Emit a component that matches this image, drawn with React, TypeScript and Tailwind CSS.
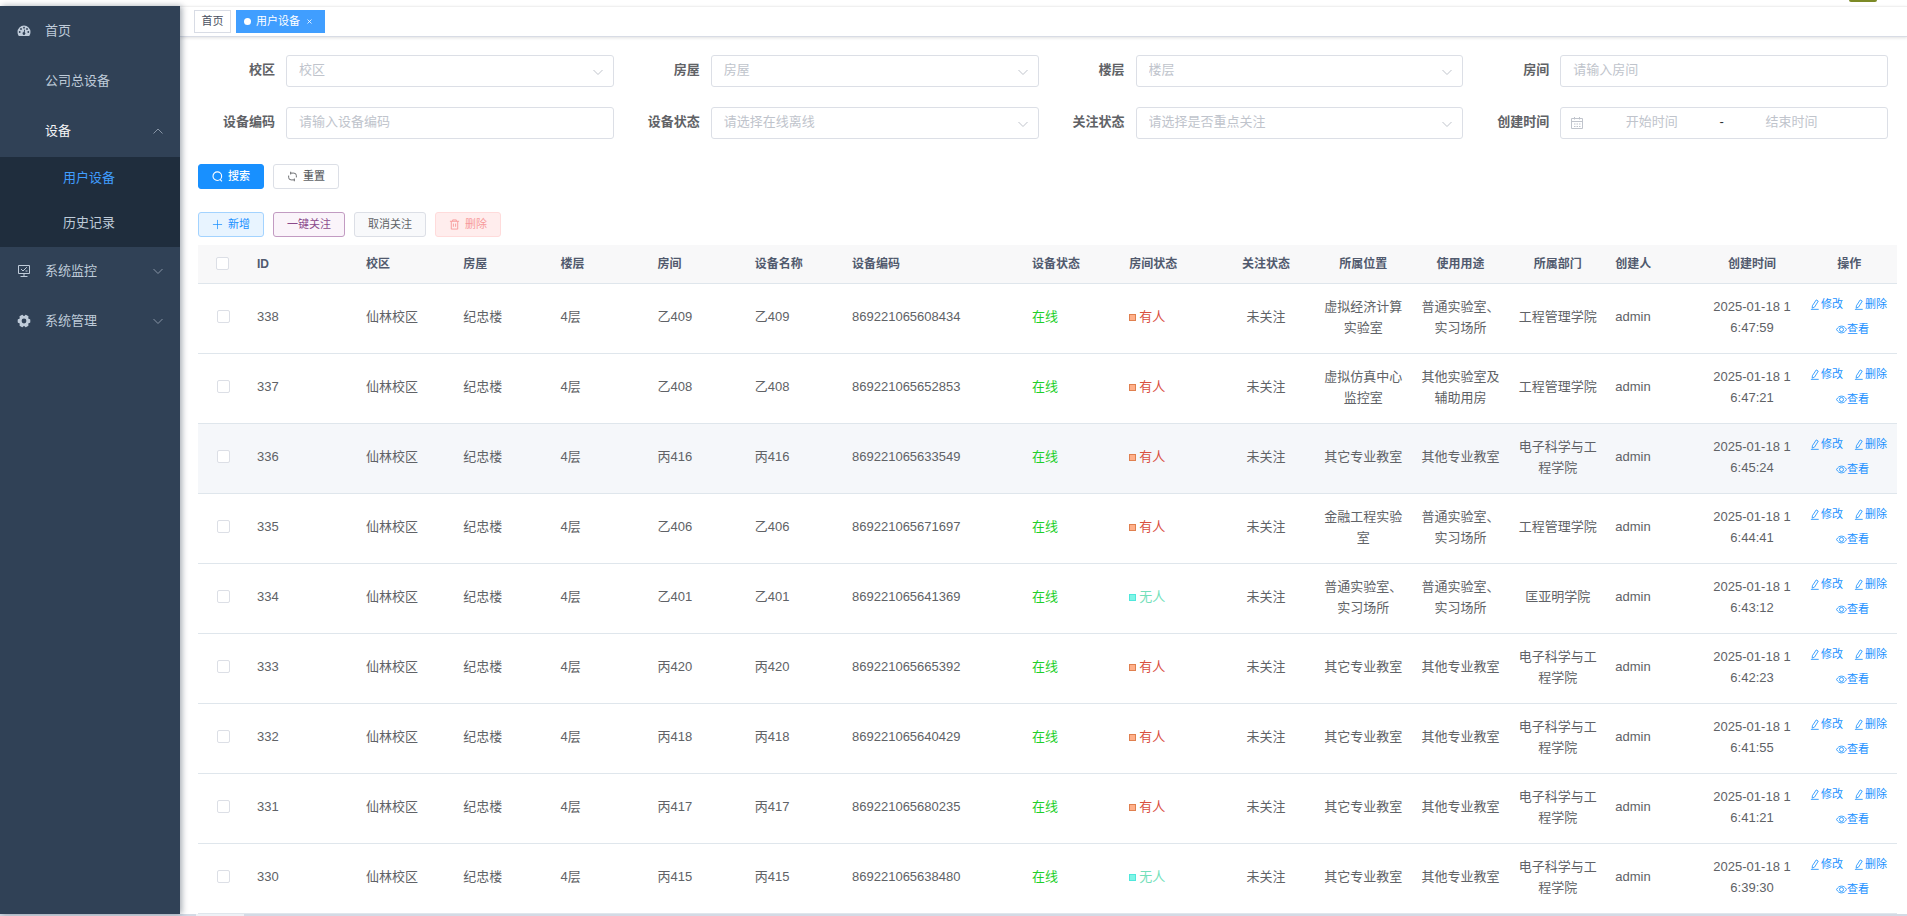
import React from 'react';

const rows = [
  ['338', '乙409', '869221065608434', '有人', '虚拟经济计算实验室', '普通实验室、实习场所', '工程管理学院', '2025-01-18 16:47:59'],
  ['337', '乙408', '869221065652853', '有人', '虚拟仿真中心监控室', '其他实验室及辅助用房', '工程管理学院', '2025-01-18 16:47:21'],
  ['336', '丙416', '869221065633549', '有人', '其它专业教室', '其他专业教室', '电子科学与工程学院', '2025-01-18 16:45:24'],
  ['335', '乙406', '869221065671697', '有人', '金融工程实验室', '普通实验室、实习场所', '工程管理学院', '2025-01-18 16:44:41'],
  ['334', '乙401', '869221065641369', '无人', '普通实验室、实习场所', '普通实验室、实习场所', '匡亚明学院', '2025-01-18 16:43:12'],
  ['333', '丙420', '869221065665392', '有人', '其它专业教室', '其他专业教室', '电子科学与工程学院', '2025-01-18 16:42:23'],
  ['332', '丙418', '869221065640429', '有人', '其它专业教室', '其他专业教室', '电子科学与工程学院', '2025-01-18 16:41:55'],
  ['331', '丙417', '869221065680235', '有人', '其它专业教室', '其他专业教室', '电子科学与工程学院', '2025-01-18 16:41:21'],
  ['330', '丙415', '869221065638480', '无人', '其它专业教室', '其他专业教室', '电子科学与工程学院', '2025-01-18 16:39:30'],
];

const columns: { title: string; center?: boolean }[] = [
  { title: 'ID' },
  { title: '校区' },
  { title: '房屋' },
  { title: '楼层' },
  { title: '房间' },
  { title: '设备名称' },
  { title: '设备编码' },
  { title: '设备状态' },
  { title: '房间状态' },
  { title: '关注状态', center: true },
  { title: '所属位置', center: true },
  { title: '使用用途', center: true },
  { title: '所属部门', center: true },
  { title: '创建人' },
  { title: '创建时间', center: true },
  { title: '操作', center: true },
];

function Chevron({ up, className }: { up?: boolean; className?: string }) {
  return (
    <svg className={className} viewBox="0 0 12 12" fill="none" stroke="currentColor" strokeWidth="1">
      <path d={up ? 'M1.5 8.5 6 4l4.5 4.5' : 'M1.5 4 6 8.5 10.500 4'} />
    </svg>
  );
}

function PenIcon() {
  return (
    <svg className="size-[11px]" viewBox="0 0 12 12" fill="none" stroke="currentColor" strokeWidth="0.9">
      <path d="M6.800 1 9 2.300 5 8.800 2.400 10 2.600 7.400zM1 11.300H9.500" />
    </svg>
  );
}

function EyeIcon() {
  return (
    <svg className="size-[11px]" viewBox="0 0 12 12" fill="none" stroke="currentColor" strokeWidth="0.9">
      <path d="M.6 6C1.800 3.600 3.700 2.300 6 2.300S10.200 3.600 11.400 6C10.200 8.400 8.300 9.700 6 9.700S1.800 8.400.6 6z" />
      <circle cx="6" cy="6" r="2.200" />
    </svg>
  );
}

function DashboardIcon() {
  return (
    <svg className="size-[14px]" viewBox="0 0 14 14">
      <path fill="currentColor" d="M7 1.500a6.500 6.500 0 0 0-6.500 6.500c0 1.400.4 2.700 1.100 3.800.1.200.3.300.5.300h9.800c.2 0 .4-.1.500-.3.700-1.100 1.100-2.400 1.100-3.800A6.500 6.500 0 0 0 7 1.500z" />
      <g fill="#304156">
        <circle cx="2.700" cy="8" r="0.900" />
        <circle cx="4" cy="5" r="0.900" />
        <circle cx="7" cy="3.700" r="0.900" />
        <circle cx="10" cy="5" r="0.900" />
        <circle cx="11.300" cy="8" r="0.900" />
        <path d="M7.300 5.500 8.100 5.700 7.700 8.300A1.400 1.400 0 1 1 6.700 8.100z" />
      </g>
    </svg>
  );
}

function MonitorIcon() {
  return (
    <svg className="size-[14px]" viewBox="0 0 14 14" fill="none" stroke="currentColor" strokeWidth="1">
      <path d="M1.500 1.500h11v8h-11zM7 9.500v3M3.500 12.500h7M4 5 6 7 9.800 3.200M8.500 7h2" />
    </svg>
  );
}

function GearIcon() {
  return (
    <svg className="size-[14px]" viewBox="0 0 14 14">
      <g fill="currentColor">
        <circle cx="7" cy="7" r="5.200" />
        <rect x="5" y="0.700" width="4" height="12.600" rx="1" transform="rotate(30 7 7)" />
        <rect x="5" y="0.700" width="4" height="12.600" rx="1" transform="rotate(90 7 7)" />
        <rect x="5" y="0.700" width="4" height="12.600" rx="1" transform="rotate(150 7 7)" />
      </g>
      <circle cx="7" cy="7" r="2.400" fill="#304156" />
    </svg>
  );
}

function MenuItem({ icon, label, arrow, active }: { icon?: React.ReactNode; label: string; arrow?: 'up' | 'down'; active?: boolean }) {
  return (
    <li>
      <a href="#" className={`flex h-[50px] items-center pr-4 pb-0.5 pl-[17px] text-[13px] ${active ? 'text-[#f4f4f5]' : 'text-[#bfcbd9]'}`}>
        <span className="w-7">{icon}</span>
        <span className="flex-1">{label}</span>
        {arrow && <Chevron up={arrow === 'up'} className="size-3 text-[#8794a5]" />}
      </a>
    </li>
  );
}

function Field({ id, label, children }: { id: string; label: string; children: React.ReactNode }) {
  return (
    <div className="flex pr-[9px]">
      <label htmlFor={id} className="w-[88px] shrink-0 pr-[11px] text-right text-[13px] leading-[30px] font-bold text-[#606266]">
        {label}
      </label>
      <div className="min-w-0 flex-1">{children}</div>
    </div>
  );
}

function TextField({ id, label, placeholder }: { id: string; label: string; placeholder: string }) {
  return (
    <Field id={id} label={label}>
      <input id={id} placeholder={placeholder} className="block h-8 w-full rounded-[3px] border border-[#dcdfe6] px-3 pb-[3px] text-[13px] placeholder:text-[#c0c4cc]" />
    </Field>
  );
}

function SelectField({ id, label, placeholder }: { id: string; label: string; placeholder: string }) {
  return (
    <Field id={id} label={label}>
      <div className="relative">
        <select id={id} className="block h-8 w-full appearance-none rounded-[3px] border border-[#dcdfe6] bg-white px-3 pb-[3px] text-[13px] text-[#c0c4cc]">
          <option>{placeholder}</option>
        </select>
        <Chevron className="pointer-events-none absolute top-[11px] right-2.5 size-3 text-[#c0c4cc]" />
      </div>
    </Field>
  );
}

const buttonBase = 'flex h-[25px] items-center justify-center gap-[5px] rounded-[3px] border pb-px text-[11px]';

export default function App() {
  return (
    <div className="flex h-screen flex-col overflow-hidden bg-white font-['Liberation_Sans','Noto_Sans_CJK_SC',sans-serif] text-[#606266]">
      <div className="flex min-h-0 flex-1">
        <div className="z-10 flex w-[180px] shrink-0 flex-col pt-1.5">
          <nav className="flex-1 bg-[#304156] pt-px shadow-[2px_0_6px_rgba(0,21,41,0.35)]">
            <ul>
              <MenuItem icon={<DashboardIcon />} label="首页" />
              <MenuItem label="公司总设备" />
              <MenuItem label="设备" arrow="up" active />
              <li>
                <ul className="bg-[#1f2d3d] text-[13px]">
                  <li>
                    <a href="#" className="flex h-[45px] items-center pb-[3px] pl-[63px] text-[#409eff]">用户设备</a>
                  </li>
                  <li>
                    <a href="#" className="flex h-[45px] items-center pb-[3px] pl-[63px] text-[#bfcbd9]">历史记录</a>
                  </li>
                </ul>
              </li>
              <MenuItem icon={<MonitorIcon />} label="系统监控" arrow="down" />
              <MenuItem icon={<GearIcon />} label="系统管理" arrow="down" />
            </ul>
          </nav>
        </div>

        <main className="min-w-0 flex-1">
          <header className="flex h-1.5 justify-end pr-[30px]">
            <div className="h-0.5 w-7 rounded-b-[3px] bg-[#7c8a26]" />
          </header>
          <div className="flex h-[31px] items-start gap-[5px] border-t border-b border-t-[#f0f0f0] border-b-[#d8dce5] pt-[3px] pl-3.5 shadow-[0_1px_3px_rgba(0,0,0,0.12)]">
            <a href="#" className="flex h-[23px] w-[37px] items-center justify-center border border-[#d8dce5] text-[11px] text-[#495060]">首页</a>
            <a href="#" className="flex h-[23px] w-[89px] items-center bg-[#409eff] pl-2 text-[11px] text-white">
              <span className="mr-[5px] size-[7px] rounded-full bg-white" />
              用户设备
              <svg className="ml-[7px] size-[5px]" viewBox="0 0 5 5" stroke="currentColor" strokeWidth="0.8">
                <path d="M.5.5l4 4M4.500.5l-4 4" />
              </svg>
            </a>
          </div>

          <div className="pt-[18px] pr-2.5 pl-[18px]">
            <form className="grid grid-cols-4 gap-y-5">
              <SelectField id="campus" label="校区" placeholder="校区" />
              <SelectField id="building" label="房屋" placeholder="房屋" />
              <SelectField id="floor" label="楼层" placeholder="楼层" />
              <TextField id="room" label="房间" placeholder="请输入房间" />
              <TextField id="code" label="设备编码" placeholder="请输入设备编码" />
              <SelectField id="status" label="设备状态" placeholder="请选择在线离线" />
              <SelectField id="follow" label="关注状态" placeholder="请选择是否重点关注" />
              <Field id="start" label="创建时间">
                <div className="flex h-8 items-center rounded-[3px] border border-[#dcdfe6] pr-7 pb-0.5 pl-[9px] text-[13px]">
                  <svg className="mt-0.5 size-3.5 shrink-0" viewBox="0 0 14 14" fill="none" stroke="#c0c4cc">
                    <path d="M1.500 2.500h11v10h-11zM1.500 5.500h11M4.500 1v2.500M9.500 1v2.500M4 8h1.500M6.500 8H8M9 8h1.500M4 10.500h1.500M6.500 10.500H8M9 10.500h1.500" />
                  </svg>
                  <input id="start" placeholder="开始时间" className="min-w-0 flex-1 text-center placeholder:text-[#c0c4cc]" />
                  <span className="text-[#303133]">-</span>
                  <input aria-label="结束时间" placeholder="结束时间" className="min-w-0 flex-1 text-center placeholder:text-[#c0c4cc]" />
                </div>
              </Field>
            </form>

            <div className="mt-[25px] flex gap-[9px]">
              <button className={`${buttonBase} w-[66px] border-[#1890ff] bg-[#1890ff] font-medium text-white`}>
                <svg className="size-[11px]" viewBox="0 0 12 12" fill="none" stroke="currentColor" strokeWidth="1.200">
                  <circle cx="5.800" cy="5.600" r="4.700" />
                  <path d="m8.800 9.200 2 2" />
                </svg>
                搜索
              </button>
              <button className={`${buttonBase} w-[66px] border-[#dcdfe6] bg-white font-medium text-[#606266]`}>
                <svg className="size-[11px]" viewBox="0 0 12 12" fill="none" stroke="currentColor">
                  <path d="M4 2.300H7.500A2.700 2.700 0 0 1 10.200 5v2M8 9.700H4.500A2.700 2.700 0 0 1 1.800 7V5M4 .8v3M8 8.200v3" />
                </svg>
                重置
              </button>
            </div>

            <div className="mt-[23px] flex gap-[9px]">
              <button className={`${buttonBase} w-[66px] border-[#a3d3ff] bg-[#e8f4ff] text-[#1890ff]`}>
                <svg className="size-[11px]" viewBox="0 0 12 12" fill="none" stroke="currentColor" strokeWidth="0.8">
                  <path d="M6 1v10M1 6h10" />
                </svg>
                新增
              </button>
              <button className={`${buttonBase} w-[72px] border-[#c29bc2] bg-[#faf4fa] text-[#8b4a8b]`}>一键关注</button>
              <button className={`${buttonBase} w-[72px] border-[#dcdfe6] bg-[#f8f9fb] text-[#606266]`}>取消关注</button>
              <button disabled className={`${buttonBase} w-[66px] border-[#ffdbdb] bg-[#ffeded] text-[#f79a9a]`}>
                <svg className="size-[11px]" viewBox="0 0 12 12" fill="none" stroke="currentColor">
                  <path d="M1 2.500h10M4 2.500V1h4v1.500M2.500 2.500V11h7V2.500M4.800 5v3.500M7.200 5v3.500" />
                </svg>
                删除
              </button>
            </div>

            <table className="mt-2 w-full table-fixed border-collapse text-[13px] leading-[21px]">
              <colgroup>
                <col className="w-[49px]" />
                <col className="w-[109px]" />
                <col span={5} />
                <col className="w-[180px]" />
                <col span={9} />
              </colgroup>
              <thead>
                <tr className="h-[38px] border-b border-[#dfe6ec] bg-[#f8f8f9] text-xs text-[#515a6e]">
                  <th className="p-0">
                    <input type="checkbox" aria-label="全选" className="mx-auto block size-[13px] appearance-none rounded-[2px] border border-[#dcdfe6] bg-white" />
                  </th>
                  {columns.map((c) => (
                    <th key={c.title} className={`py-0 pr-2 pl-[10px] font-bold ${c.center ? 'text-center' : 'text-left'}`}>{c.title}</th>
                  ))}
                </tr>
              </thead>
              <tbody>
                {rows.map(([id, room, code, state, place, usage, dept, time]) => (
                  <tr key={id} className={`h-[70px] border-b border-[#dfe6ec] *:pt-0 *:pr-2 *:pb-[3px] *:pl-[10px] *:break-all ${id === '336' ? 'bg-[#f5f7fa]' : ''}`}>
                    <td>
                      <input type="checkbox" aria-label={id} className="mx-auto block size-[13px] appearance-none rounded-[2px] border border-[#dcdfe6] bg-white" />
                    </td>
                    <td>{id}</td>
                    <td>仙林校区</td>
                    <td>纪忠楼</td>
                    <td>4层</td>
                    <td>{room}</td>
                    <td>{room}</td>
                    <td>{code}</td>
                    <td className="text-[#1fcf2a]">在线</td>
                    <td>
                      <span className={`flex items-center gap-[3px] ${state === '有人' ? 'text-[#d9503f]' : 'text-[#74dfba]'}`}>
                        <span className={`mt-0.5 size-[7px] border ${state === '有人' ? 'border-[#e0804f] bg-[#ffb08a]' : 'border-[#4fe8dc] bg-[#7ff5e6]'}`} />
                        {state}
                      </span>
                    </td>
                    <td className="text-center">未关注</td>
                    <td className="text-center">{place}</td>
                    <td className="text-center">{usage}</td>
                    <td className="text-center">{dept}</td>
                    <td>admin</td>
                    <td className="text-center">{time}</td>
                    <td>
                      <div className="flex flex-wrap justify-end gap-x-[11px] gap-y-1 pr-0.5 text-[11px] text-[#1890ff]">
                        <button className="flex items-center"><PenIcon />修改</button>
                        <button className="flex items-center"><PenIcon />删除</button>
                        <button className="mr-[18px] flex items-center"><EyeIcon />查看</button>
                      </div>
                    </td>
                  </tr>
                ))}
              </tbody>
            </table>
          </div>
        </main>
      </div>
      <div className="h-0.5 shrink-0 bg-[#d3dae5] pl-[196px]">
        <div className="h-full w-12 bg-[#eef1f6]" />
      </div>
    </div>
  );
}
